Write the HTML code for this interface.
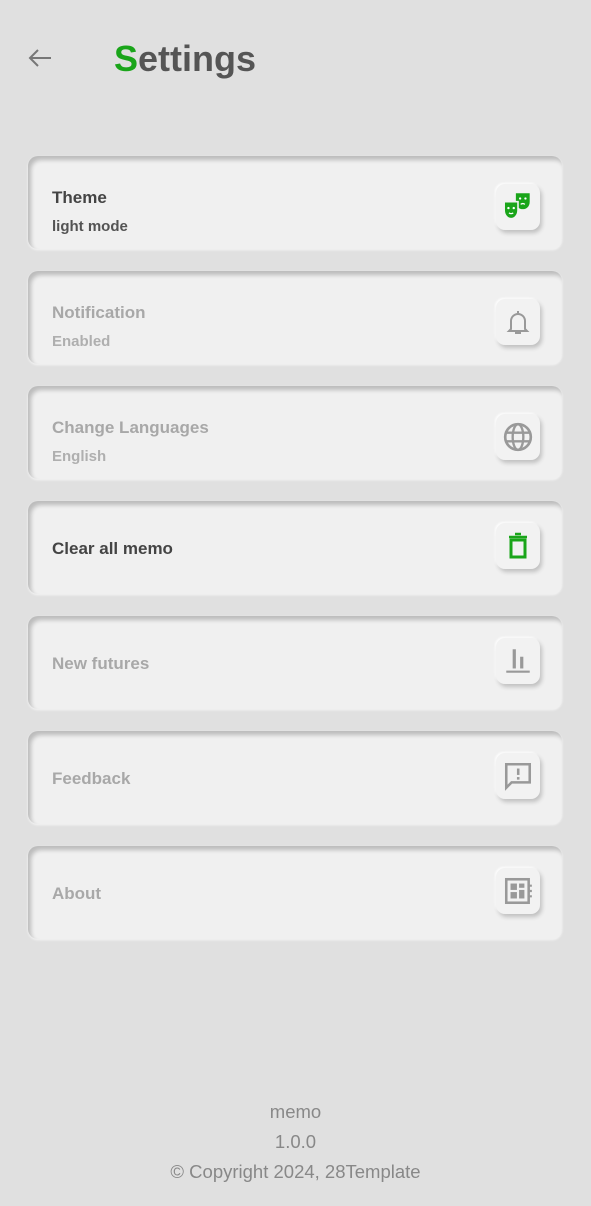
<!DOCTYPE html>
<html><head><meta charset="utf-8"><style>
*{margin:0;padding:0;box-sizing:border-box}
body{width:591px;height:1206px;background:#e0e0e0;font-family:"Liberation Sans",sans-serif;position:relative;overflow:hidden}
.back{position:absolute;left:26px;top:45px}
h1{position:absolute;left:114px;top:38px;font-size:36px;font-weight:bold;color:#555}
h1 span{color:#1aa51a}
.card{position:absolute;left:28px;width:534px;height:93px;background:#f0f0f0;border-radius:10px;box-shadow:inset 3px 4px 4px rgba(0,0,0,0.22),0 1px 2px #f6f6f6}
.t{position:absolute;left:24px;top:32px;font-size:17px;font-weight:bold}
.s{position:absolute;left:24px;top:62px;font-size:15px;font-weight:bold;opacity:.9}
.one{top:38px}
.on{color:#444}.off{color:#a8a8a8}
.ib{position:absolute;left:468px;top:28px;width:44px;height:46px;border-radius:9px;background:#f2f2f2;box-shadow:2px 3px 4px rgba(0,0,0,0.2),-1px -1px 2px #fff;display:flex;align-items:center;justify-content:center}
.ib.u{top:22px}
.foot{position:absolute;left:0;width:591px;text-align:center;color:#888;font-size:18.5px}
</style></head><body>
<svg class="back" width="28" height="26" viewBox="0 0 28 26"><path d="M25 13H4M12 5l-8 8 8 8" fill="none" stroke="#777" stroke-width="2"/></svg>
<h1><span>S</span>ettings</h1>

<div class="card" style="top:156px"><div class="t on">Theme</div><div class="s on">light mode</div>
<div class="ib"><svg width="34" height="34" viewBox="0 0 32 32"><path d="M14 3h13v8c0 4.5-3 7-6.5 7S14 15.5 14 11z" fill="#1aa51a"/><path d="M3 11h13v8c0 4.5-3 8-6.5 8S3 23.5 3 19z" fill="#1aa51a" stroke="#f2f2f2" stroke-width="1.5"/><circle cx="7" cy="17" r="1.1" fill="#fff"/><circle cx="12" cy="17" r="1.1" fill="#fff"/><path d="M7.5 21.5q2 1.5 4 0" stroke="#fff" fill="none" stroke-width="1.2"/><circle cx="18" cy="8" r="1.1" fill="#fff"/><circle cx="23" cy="8" r="1.1" fill="#fff"/><path d="M18.5 13.5q2-1.5 4 0" stroke="#fff" fill="none" stroke-width="1.2"/></svg></div></div>

<div class="card" style="top:271px"><div class="t off">Notification</div><div class="s off">Enabled</div>
<div class="ib"><svg width="26" height="28" viewBox="0 0 26 28"><path d="M13 3v2M6 21V13a7 7 0 0 1 14 0v8l2 2H4z" fill="none" stroke="#999" stroke-width="2"/><path d="M10 25h6" stroke="#999" stroke-width="2"/></svg></div></div>

<div class="card" style="top:386px"><div class="t off">Change Languages</div><div class="s off">English</div>
<div class="ib"><svg width="32" height="32" viewBox="0 0 30 30"><circle cx="15" cy="15" r="12" fill="none" stroke="#999" stroke-width="2.5"/><ellipse cx="15" cy="15" rx="5" ry="12" fill="none" stroke="#999" stroke-width="2.2"/><path d="M3 11h24M3 19h24" stroke="#999" stroke-width="2.2"/></svg></div></div>

<div class="card" style="top:501px"><div class="t on one">Clear all memo</div>
<div class="ib u"><svg width="24" height="28" viewBox="0 0 24 28"><path d="M3 5h18M9 2h6" stroke="#1aa51a" stroke-width="2.5"/><rect x="5" y="8" width="14" height="17" fill="none" stroke="#1aa51a" stroke-width="3"/></svg></div></div>

<div class="card" style="top:616px"><div class="t off one">New futures</div>
<div class="ib u"><svg width="32" height="32" viewBox="0 0 30 30"><rect x="10" y="4" width="3" height="18" fill="#999"/><rect x="17" y="11" width="3" height="11" fill="#999"/><rect x="4" y="24" width="22" height="2" fill="#999"/></svg></div></div>

<div class="card" style="top:731px"><div class="t off one">Feedback</div>
<div class="ib u"><svg width="32" height="32" viewBox="0 0 30 30"><path d="M4 4h22v17H9l-5 5z" fill="none" stroke="#999" stroke-width="2.4"/><rect x="14" y="8" width="2.4" height="6" fill="#999"/><rect x="14" y="16" width="2.4" height="2.4" fill="#999"/></svg></div></div>

<div class="card" style="top:846px"><div class="t off one">About</div>
<div class="ib u"><svg width="32" height="32" viewBox="0 0 30 30"><rect x="4" y="4" width="21" height="22" fill="none" stroke="#999" stroke-width="2.4"/><rect x="8" y="8" width="6" height="6" fill="#999"/><rect x="16" y="8" width="5" height="4" fill="#999"/><rect x="8" y="16" width="6" height="6" fill="#999"/><rect x="16" y="14" width="5" height="8" fill="#999"/><path d="M25 10h3M25 15h3M25 20h3" stroke="#999" stroke-width="2"/></svg></div></div>

<div class="foot" style="top:1101px">memo</div>
<div class="foot" style="top:1131px">1.0.0</div>
<div class="foot" style="top:1161px">© Copyright 2024, 28Template</div>
</body></html>
